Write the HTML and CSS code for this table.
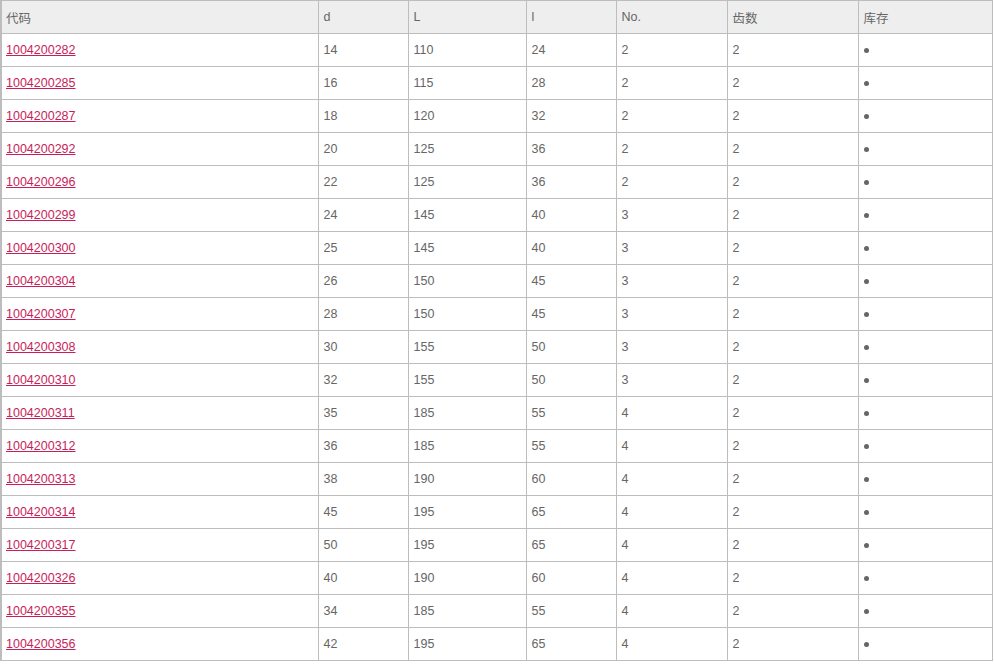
FILE: index.html
```html
<!DOCTYPE html>
<html>
<head>
<meta charset="utf-8">
<link rel="stylesheet" href="styles.css">
</head>
<body>
<table class="grid">
<colgroup>
<col class="c1"><col class="c2"><col class="c3"><col class="c4"><col class="c5"><col class="c6"><col class="c7">
</colgroup>
<thead>
<tr><th>代码</th><th>d</th><th>L</th><th>l</th><th>No.</th><th>齿数</th><th>库存</th></tr>
</thead>
<tbody>
<tr><td><a href="#">1004200282</a></td><td>14</td><td>110</td><td>24</td><td>2</td><td>2</td><td><span class="dot"></span></td></tr>
<tr><td><a href="#">1004200285</a></td><td>16</td><td>115</td><td>28</td><td>2</td><td>2</td><td><span class="dot"></span></td></tr>
<tr><td><a href="#">1004200287</a></td><td>18</td><td>120</td><td>32</td><td>2</td><td>2</td><td><span class="dot"></span></td></tr>
<tr><td><a href="#">1004200292</a></td><td>20</td><td>125</td><td>36</td><td>2</td><td>2</td><td><span class="dot"></span></td></tr>
<tr><td><a href="#">1004200296</a></td><td>22</td><td>125</td><td>36</td><td>2</td><td>2</td><td><span class="dot"></span></td></tr>
<tr><td><a href="#">1004200299</a></td><td>24</td><td>145</td><td>40</td><td>3</td><td>2</td><td><span class="dot"></span></td></tr>
<tr><td><a href="#">1004200300</a></td><td>25</td><td>145</td><td>40</td><td>3</td><td>2</td><td><span class="dot"></span></td></tr>
<tr><td><a href="#">1004200304</a></td><td>26</td><td>150</td><td>45</td><td>3</td><td>2</td><td><span class="dot"></span></td></tr>
<tr><td><a href="#">1004200307</a></td><td>28</td><td>150</td><td>45</td><td>3</td><td>2</td><td><span class="dot"></span></td></tr>
<tr><td><a href="#">1004200308</a></td><td>30</td><td>155</td><td>50</td><td>3</td><td>2</td><td><span class="dot"></span></td></tr>
<tr><td><a href="#">1004200310</a></td><td>32</td><td>155</td><td>50</td><td>3</td><td>2</td><td><span class="dot"></span></td></tr>
<tr><td><a href="#">1004200311</a></td><td>35</td><td>185</td><td>55</td><td>4</td><td>2</td><td><span class="dot"></span></td></tr>
<tr><td><a href="#">1004200312</a></td><td>36</td><td>185</td><td>55</td><td>4</td><td>2</td><td><span class="dot"></span></td></tr>
<tr><td><a href="#">1004200313</a></td><td>38</td><td>190</td><td>60</td><td>4</td><td>2</td><td><span class="dot"></span></td></tr>
<tr><td><a href="#">1004200314</a></td><td>45</td><td>195</td><td>65</td><td>4</td><td>2</td><td><span class="dot"></span></td></tr>
<tr><td><a href="#">1004200317</a></td><td>50</td><td>195</td><td>65</td><td>4</td><td>2</td><td><span class="dot"></span></td></tr>
<tr><td><a href="#">1004200326</a></td><td>40</td><td>190</td><td>60</td><td>4</td><td>2</td><td><span class="dot"></span></td></tr>
<tr><td><a href="#">1004200355</a></td><td>34</td><td>185</td><td>55</td><td>4</td><td>2</td><td><span class="dot"></span></td></tr>
<tr><td><a href="#">1004200356</a></td><td>42</td><td>195</td><td>65</td><td>4</td><td>2</td><td><span class="dot"></span></td></tr>
</tbody>
</table>
</body>
</html>
```

FILE: styles.css
```css
html, body {
  margin: 0;
  padding: 0;
  background: #ffffff;
}
body {
  font-family: "Liberation Sans", Arial, "Noto Sans CJK SC", sans-serif;
  font-size: 12.5px;
  color: #666666;
}
.grid {
  border-collapse: collapse;
  table-layout: fixed;
  width: 991px;
  border-left: 2px solid #bdbdbd;
}
.c1 { width: 317px; }
.c2 { width: 90px; }
.c3 { width: 118px; }
.c4 { width: 90px; }
.c5 { width: 111px; }
.c6 { width: 131px; }
.c7 { width: 134px; }
.grid th,
.grid td {
  border: 1px solid #bdbdbd;
  height: 33px;
  padding: 0 5px;
  box-sizing: border-box;
  text-align: left;
  vertical-align: middle;
  font-weight: normal;
  color: #666666;
  white-space: nowrap;
}
.grid th:first-child,
.grid td:first-child {
  padding-left: 4px;
}
.grid th {
  background: #eeeeee;
}
.grid a {
  color: #c81e5a;
  text-decoration: underline;
}
.dot {
  display: inline-block;
  width: 5px;
  height: 5px;
  border-radius: 50%;
  background: #666666;
  vertical-align: middle;
}
```
